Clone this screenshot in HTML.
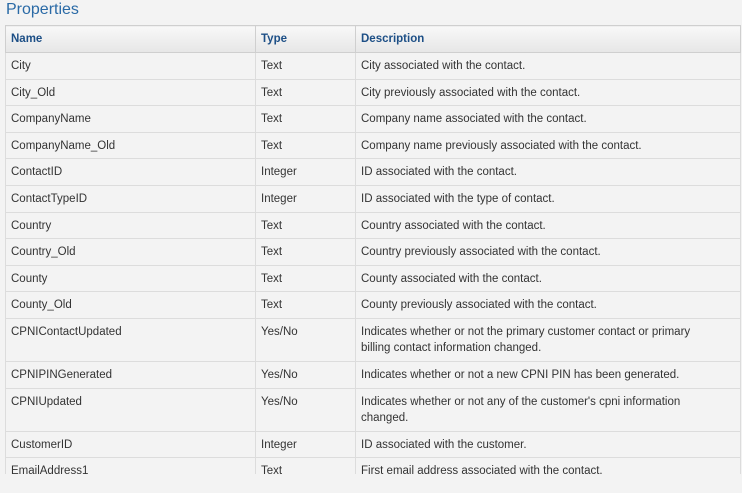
<!DOCTYPE html>
<html><head><style>
html,body{margin:0;padding:0;background:#f3f3f3;width:742px;height:493px;overflow:hidden;font-family:"Liberation Sans",sans-serif;}
h2{margin:0;position:absolute;left:6px;top:0px;font-weight:normal;font-size:16px;color:#2a6aa6;line-height:20px;}
.wrap{position:absolute;left:5px;top:25px;width:736px;height:449px;overflow:hidden;}
table{border-collapse:collapse;width:736px;font-size:11.5px;color:#333;table-layout:fixed;}
th{height:26px;text-align:left;color:#1d4f86;font-weight:bold;background:linear-gradient(#f8f8f8,#e6e6e6);border:1px solid #cfcfcf;padding:0 5px;font-size:11.5px;}
td{border:1px solid #dcdcdc;padding:5px 5px 3px 5px;height:17.6px;vertical-align:top;line-height:16px;}
td.d{height:34px}
</style></head><body>
<h2>Properties</h2>
<div class="wrap"><table>
<colgroup><col style="width:250px"><col style="width:100px"><col></colgroup>
<tr><th>Name</th><th>Type</th><th>Description</th></tr>
<tr><td>City</td><td>Text</td><td>City associated with the contact.</td></tr>
<tr><td>City_Old</td><td>Text</td><td>City previously associated with the contact.</td></tr>
<tr><td>CompanyName</td><td>Text</td><td>Company name associated with the contact.</td></tr>
<tr><td>CompanyName_Old</td><td>Text</td><td>Company name previously associated with the contact.</td></tr>
<tr><td>ContactID</td><td>Integer</td><td>ID associated with the contact.</td></tr>
<tr><td>ContactTypeID</td><td>Integer</td><td>ID associated with the type of contact.</td></tr>
<tr><td>Country</td><td>Text</td><td>Country associated with the contact.</td></tr>
<tr><td>Country_Old</td><td>Text</td><td>Country previously associated with the contact.</td></tr>
<tr><td>County</td><td>Text</td><td>County associated with the contact.</td></tr>
<tr><td>County_Old</td><td>Text</td><td>County previously associated with the contact.</td></tr>
<tr><td>CPNIContactUpdated</td><td>Yes/No</td><td class="d">Indicates whether or not the primary customer contact or primary<br>billing contact information changed.</td></tr>
<tr><td>CPNIPINGenerated</td><td>Yes/No</td><td>Indicates whether or not a new CPNI PIN has been generated.</td></tr>
<tr><td>CPNIUpdated</td><td>Yes/No</td><td class="d">Indicates whether or not any of the customer's cpni information<br>changed.</td></tr>
<tr><td>CustomerID</td><td>Integer</td><td>ID associated with the customer.</td></tr>
<tr><td>EmailAddress1</td><td>Text</td><td>First email address associated with the contact.</td></tr>
</table></div>
</body></html>
